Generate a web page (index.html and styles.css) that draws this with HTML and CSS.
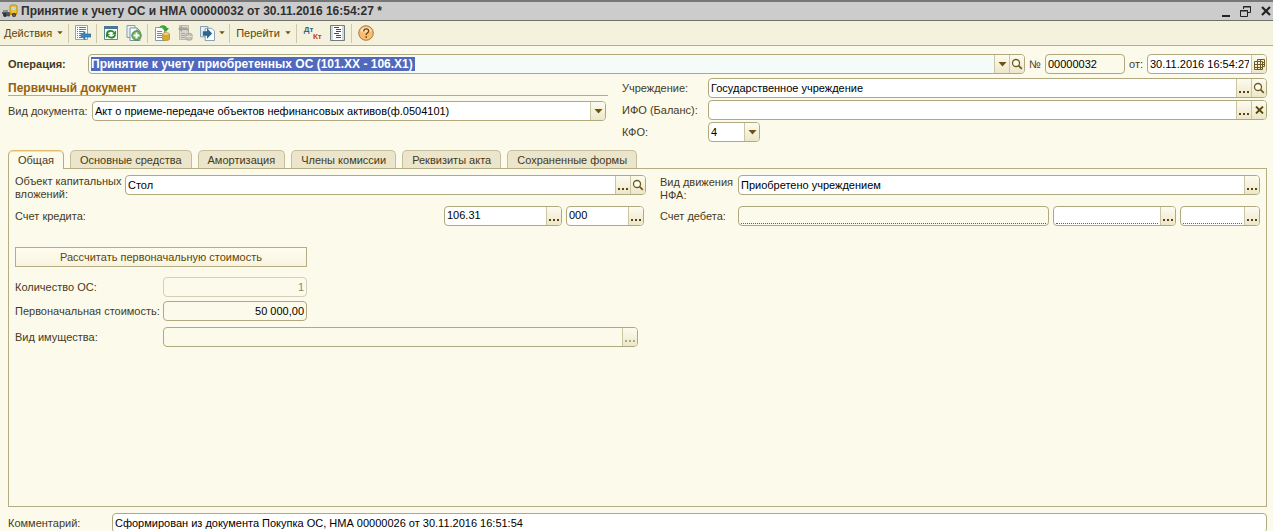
FILE: index.html
```html
<!DOCTYPE html>
<html lang="ru">
<head>
<meta charset="utf-8">
<title>Принятие к учету ОС и НМА</title>
<link rel="stylesheet" href="styles.css">
</head>
<body>
<svg class="defs" aria-hidden="true">
  <symbol id="lens" viewBox="0 0 12 12"><circle cx="5" cy="5" r="3.5" fill="#fffef0" stroke="#6c5a20" stroke-width="1.3"/><path d="M7.6 7.6L10.8 10.8" stroke="#6c5a20" stroke-width="1.8"/></symbol>
  <symbol id="caret" viewBox="0 0 9 5"><path d="M.5 0h8L4.500 4.500z" fill="#6b5410"/></symbol>
  <symbol id="dots" viewBox="0 0 11 2"><path d="M0 0h2v2H0zM4 0h2v2H4zM8 0h2v2H8z" fill="currentColor"/></symbol>
</svg>

<header class="titlebar">
  <svg class="truck" viewBox="0 0 16 14" aria-hidden="true">
    <path d="M0 8h8v2H0z" fill="#555b62"/><path d="M1 6h5v2H1z" fill="#8d8f8a"/>
    <path d="M8 2l1-1h5l1 1v8H8z" fill="#efc02f" stroke="#a57a13" stroke-width=".7"/>
    <path d="M9.500 3h4v3h-4z" fill="#b9daf2"/><path d="M8 9h7v2H8z" fill="#c58a17"/>
    <circle cx="3" cy="11" r="2" fill="#2d3035"/><circle cx="6.500" cy="11" r="1.600" fill="#474a4e"/><circle cx="12" cy="11" r="2" fill="#2d3035"/><circle cx="12" cy="11" r=".7" fill="#bbb"/>
  </svg>
  <h1 class="title">Принятие к учету ОС и НМА 00000032 от 30.11.2016 16:54:27 *</h1>
  <div class="window-buttons">
    <button aria-label="Свернуть"><svg width="8" height="12" viewBox="0 0 8 12"><path d="M0 10h8v2H0z" fill="#222"/></svg></button>
    <button aria-label="Восстановить"><svg width="11" height="11" viewBox="0 0 11 11"><path d="M3.500 3V.5h7v6H8M3 1h8" fill="none" stroke="#222"/><path d="M.5 4.500h7v6h-7zM0 5h8" fill="none" stroke="#222"/></svg></button>
    <button aria-label="Закрыть"><svg width="10" height="10" viewBox="0 0 10 10"><path d="M1 1l8 8M9 1L1 9" stroke="#222" stroke-width="2.200"/></svg></button>
  </div>
</header>

<nav class="toolbar">
  <button class="tool menu">Действия<svg class="tiny"><use href="#caret"/></svg></button>
  <span class="sep"></span>
  <button class="tool" aria-label="Записать и закрыть"><svg width="16" height="16" viewBox="0 0 16 16"><path d="M.5 .5h12v14H.5z" fill="#fbfdff" stroke="#8aa3b8"/><path d="M2 2.500h1m1 0h7M2 4.500h1m1 0h7M2 6.500h1m1 0h5M2 8.500h1m1 0h3M2 10.500h1m1 0h1M2 12.500h1m1 0h3" stroke="#567f9f"/><path d="M5 10.500l5-4v2.500h6v3h-6v2.500z" fill="#3f86b9" stroke="#1f618f" stroke-width=".6"/></svg></button>
  <span class="sep"></span>
  <span class="tools">
    <button class="tool" aria-label="Перечитать"><svg width="16" height="16" viewBox="0 0 16 16"><path d="M1.500 1.500h13v13h-13z" fill="#f5fbf5" stroke="#66829a"/><path d="M1 1h14v3H1z" fill="#49779b"/><path d="M4 9c0-3.500 5-4 7-1.500" fill="none" stroke="#2c852c" stroke-width="1.800"/><path d="M13 5.500V9.500H9z" fill="#2c852c"/><path d="M12 9.500c0 3.500-5 4-7 1.500" fill="none" stroke="#2c852c" stroke-width="1.800"/><path d="M3 13V9h4z" fill="#2c852c"/></svg></button>
    <button class="tool" aria-label="Скопировать"><svg width="16" height="16" viewBox="0 0 16 16"><path d="M1 .5h8v12H1z" fill="#e7f0f5" stroke="#86a0b2"/><path d="M4 3h7l3 3v9.500H4z" fill="#fff" stroke="#7792a5"/><path d="M11 3v3h3" fill="none" stroke="#7792a5"/><circle cx="10.500" cy="10.500" r="4.700" fill="#72af5c" stroke="#47883b"/><path d="M10.500 7.500v6M7.500 10.500h6" stroke="#fff" stroke-width="2"/></svg></button>
  </span>
  <span class="sep"></span>
  <span class="tools">
    <button class="tool" aria-label="Провести"><svg width="16" height="16" viewBox="0 0 16 16"><path d="M1.500 2.500h9v13h-9z" fill="#f9fcff" stroke="#829bae"/><path d="M3 6.500h5M3 8.500h5M3 10.500h5M3 12.500h5" stroke="#688ba5"/><path d="M5 3c2-4 7-3 8 0h2l-3 4-4-4h2c-1-1.500-3-1.500-5 0z" fill="#3da034"/><path d="M9 9h6v6H9z" fill="#edc235"/><ellipse cx="12" cy="9" rx="3.500" ry="1.300" fill="#ffe887" stroke="#ad7d16" stroke-width=".7"/><path d="M8.500 11c1 1.500 6 1.500 7 0M8.500 13c1 1.500 6 1.500 7 0M8.500 9v5.500c1 1.500 6 1.500 7 0V9" fill="none" stroke="#ad7d16" stroke-width=".7"/></svg></button>
    <button class="tool" aria-label="Отменить проведение" disabled><svg width="16" height="16" viewBox="0 0 16 16"><path d="M2.500 .5h9v14h-9z" fill="#d8d6ca" stroke="#bbb9ab"/><path d="M4 8.500h4M4 10.500h4M4 12.500h4" stroke="#aaa99d"/><path d="M1 4l4-3.500v2h3c3 0 4 2 4 5-1-2-2-2.500-4-2.500H5v2z" fill="#a3a29a"/><path d="M9 9.500c0-1.500 6-1.500 6 0V14c0 1.500-6 1.500-6 0z" fill="#c4c2b7" stroke="#aaa89c"/><path d="M9 11.500h6" stroke="#e3e1d4"/></svg></button>
    <button class="tool pair" aria-label="Ввести на основании"><svg width="15" height="15" viewBox="0 0 16 16"><path d="M.5 .5h8v11h-8z" fill="#e8f0f7" stroke="#7c9ab1"/><path d="M5.500 2.500h7l3 3v10h-10z" fill="#fff" stroke="#7c9ab1"/><path d="M3 5.500h4.500v-3L13 8l-5.500 5.500v-3H3z" fill="#2d6792"/></svg><svg class="tiny"><use href="#caret"/></svg></button>
  </span>
  <span class="sep"></span>
  <button class="tool menu">Перейти<svg class="tiny"><use href="#caret"/></svg></button>
  <span class="sep"></span>
  <span class="tools">
    <button class="tool dtkt"><span class="dt">Дт</span><span class="kt">Кт</span></button>
    <button class="tool" aria-label="Структура подчиненности"><svg width="16" height="16" viewBox="0 0 16 16"><path d="M.5 .5h14v15H.5z" fill="#d3d9da" stroke="#747b7d"/><path d="M3 1h9v14H3z" fill="#fff"/><path d="M4 2h5v1H4zM6 4h5v1H6zM6 6h5v1H6zM4 8h5v1H4zM6 10h5v1H6zM6 12h5v1H6z" fill="#245779"/></svg></button>
  </span>
  <span class="sep"></span>
  <button class="tool" aria-label="Справка"><svg width="16" height="16" viewBox="0 0 16 16"><circle cx="8" cy="8" r="7.300" fill="#f7bd72" stroke="#a77a42"/><path d="M2.500 6c1-5 10-5 11 0-3 2-8 2-11 0z" fill="#fce2b8"/><path d="M5.700 6.500c0-3.500 5-3.300 5-.5 0 1.800-2.500 1.700-2.500 4" fill="none" stroke="#79410c" stroke-width="1.400"/><path d="M7.400 11.200h1.600v1.600H7.400z" fill="#79410c"/></svg></button>
</nav>

<main class="form">
  <section class="operation">
    <label class="strong op-label" for="op">Операция:</label>
    <div class="field tinted grow">
      <input id="op" class="marked" value="Принятие к учету приобретенных ОС (101.ХХ - 106.Х1)">
      <span class="fill"></span>
      <button aria-label="Выбрать"><svg class="caret"><use href="#caret"/></svg></button>
      <button aria-label="Открыть"><svg class="lens"><use href="#lens"/></svg></button>
    </div>
    <label class="num-label" for="num">№</label>
    <div class="field plain num"><input id="num" value="00000032"></div>
    <label class="date-label" for="date">от:</label>
    <div class="field date"><input id="date" value="30.11.2016 16:54:27"><button aria-label="Календарь"><svg width="11" height="11" viewBox="0 0 11 11"><path d="M3.500 2V.5h7v7H9" fill="none" stroke="#6c5a20"/><path d="M.5 2.500h8v8h-8zM.5 5.500h10M.5 8.500h8M3.500 2v8.500M6.500 .5v10M8.500 3.500h2" fill="none" stroke="#6c5a20"/></svg></button></div>
  </section>

  <section class="head">
    <div class="primary">
      <h2 class="group-title">Первичный документ</h2>
      <div class="line doc-kind">
        <label for="kind">Вид документа:</label>
        <div class="field select grow"><select id="kind"><option>Акт о приеме-передаче объектов нефинансовых активов(ф.0504101)</option></select><span class="arrow"><svg class="caret"><use href="#caret"/></svg></span></div>
      </div>
    </div>
    <div class="org">
      <label for="org">Учреждение:</label>
      <div class="field"><input id="org" value="Государственное учреждение"><button aria-label="Выбрать"><svg class="dots"><use href="#dots"/></svg></button><button aria-label="Открыть"><svg class="lens"><use href="#lens"/></svg></button></div>
      <label for="ifo">ИФО (Баланс):</label>
      <div class="field"><input id="ifo"><button aria-label="Выбрать"><svg class="dots"><use href="#dots"/></svg></button><button aria-label="Очистить"><svg width="9" height="8" viewBox="0 0 9 8"><path d="M1 .5l7 7M8 .5l-7 7" stroke="#5c4708" stroke-width="1.800"/></svg></button></div>
      <label for="kfo">КФО:</label>
      <div class="field select kfo"><select id="kfo"><option>4</option></select><span class="arrow"><svg class="caret"><use href="#caret"/></svg></span></div>
    </div>
  </section>

  <div class="tabs" role="tablist">
    <button class="tab active" role="tab" aria-selected="true">Общая</button>
    <button class="tab" role="tab">Основные средства</button>
    <button class="tab" role="tab">Амортизация</button>
    <button class="tab" role="tab">Члены комиссии</button>
    <button class="tab" role="tab">Реквизиты акта</button>
    <button class="tab" role="tab">Сохраненные формы</button>
  </div>

  <section class="panel" role="tabpanel">
    <div class="columns">
      <div class="column">
        <div class="line object">
          <label class="two" for="object">Объект капитальных вложений:</label>
          <div class="field grow"><input id="object" value="Стол"><button aria-label="Выбрать"><svg class="dots"><use href="#dots"/></svg></button><button aria-label="Открыть"><svg class="lens"><use href="#lens"/></svg></button></div>
        </div>
        <div class="line credit">
          <label class="grow" for="credit">Счет кредита:</label>
          <div class="field account"><input id="credit" value="106.31"><button aria-label="Выбрать"><svg class="dots"><use href="#dots"/></svg></button></div>
          <div class="field kek"><input aria-label="КЭК кредита" value="000"><button aria-label="Выбрать"><svg class="dots"><use href="#dots"/></svg></button></div>
        </div>
      </div>
      <div class="column right">
        <div class="line">
          <label class="two" for="move">Вид движения НФА:</label>
          <div class="field grow"><input id="move" value="Приобретено учреждением"><button aria-label="Выбрать"><svg class="dots"><use href="#dots"/></svg></button></div>
        </div>
        <div class="line debit">
          <label for="debit">Счет дебета:</label>
          <div class="field plain required grow"><input id="debit" readonly></div>
          <div class="field required debit-account"><input aria-label="Счет"><button aria-label="Выбрать"><svg class="dots"><use href="#dots"/></svg></button></div>
          <div class="field required debit-kek"><input aria-label="КЭК дебета"><button aria-label="Выбрать"><svg class="dots"><use href="#dots"/></svg></button></div>
        </div>
      </div>
    </div>

    <button class="calc">Рассчитать первоначальную стоимость</button>
    <div class="values">
      <label for="count">Количество ОС:</label>
      <div class="field plain disabled amount"><input id="count" value="1" disabled></div>
      <label for="cost">Первоначальная стоимость:</label>
      <div class="field plain amount"><input id="cost" value="50 000,00"></div>
      <label class="property-label" for="property">Вид имущества:</label>
      <div class="field plain property"><input id="property" readonly><button aria-label="Выбрать" disabled><svg class="dots"><use href="#dots"/></svg></button></div>
    </div>
  </section>

  <footer class="comment">
    <label for="comment">Комментарий:</label>
    <div class="field grow"><input id="comment" value="Сформирован из документа Покупка ОС, НМА 00000026 от 30.11.2016 16:51:54"></div>
  </footer>
</main>
</body>
</html>
```
FILE: styles.css
```css
* { box-sizing: border-box; }
body {
  margin: 0;
  height: 100vh;
  display: flex;
  flex-direction: column;
  overflow: hidden;
  background: #fcfaeb;
  color: #453a1c;
  font: 11px/13px "Liberation Sans", Arial, sans-serif;
}
button, input, select { font: inherit; color: inherit; margin: 0; padding: 0; border: 0; background: none; }
svg { display: block; flex: none; }
.defs { position: absolute; width: 0; height: 0; }
.grow { flex: 1; }

.titlebar {
  display: flex;
  align-items: center;
  height: 21px;
  padding: 0 2px;
  background: #ccc;
  border-top: 2px solid #777;
  border-bottom: 1px solid #6f6f65;
}
.truck { width: 16px; height: 14px; }
.title { flex: 1; margin: 0 0 0 3px; font-size: 12px; line-height: 16px; color: #303030; white-space: nowrap; }
.window-buttons { display: flex; align-items: center; gap: 10px; }

.toolbar {
  display: flex;
  align-items: center;
  height: 25px;
  padding: 0 4px;
  background: #f4f1dc;
  border-bottom: 1px solid #b5ae84;
}
.tools { display: flex; gap: 7px; }
.tool { display: flex; align-items: center; justify-content: center; gap: 5px; width: 16px; height: 22px; color: #5c4708; }
.menu { width: auto; }
.pair { width: 24px; gap: 4px; }
.tiny { width: 6px; height: 4px; }
.sep { width: 1px; height: 19px; margin: 0 6px 0 5px; background: #cfc9a8; }
.tool.dtkt { flex-direction: column; align-items: stretch; gap: 0; width: 20px; font-size: 8px; line-height: 7px; font-weight: bold; padding: 0 1px; }
.dt { text-align: left; color: #33658a; }
.kt { text-align: right; color: #c43c2c; }

.form { flex: 1; display: flex; flex-direction: column; min-height: 0; padding: 8px 6px 0 8px; }
.field {
  display: flex;
  height: 20px;
  min-width: 0;
  overflow: hidden;
  background: #fff;
  border: 1px solid #b0a980;
  border-radius: 4px;
  color: #000;
}
.field input { flex: 1; min-width: 0; width: 0; padding: 0 2px; outline: 0; }
.field button, .arrow {
  display: flex;
  align-items: center;
  justify-content: center;
  width: 15px;
  flex: none;
  border-left: 1px solid #cbc5a3;
  background: linear-gradient(#fdfbee, #ece7cb);
  color: #5c4708;
}
.plain { background: #fcfaeb; }
.tinted { background: #f5fbf8; }
.select { display: grid; }
.select select { grid-area: 1 / 1; appearance: none; min-width: 0; padding: 0 2px; outline: 0; }
.arrow { grid-area: 1 / 1; justify-self: end; pointer-events: none; }
.caret { width: 9px; height: 5px; }
.lens { width: 12px; height: 12px; }
.dots { width: 11px; height: 2px; margin-top: 8px; }
.line { display: flex; align-items: center; }

.operation { display: flex; align-items: center; }
.op-label { width: 80px; }
.strong { font-weight: bold; }
.field .marked { flex: none; width: 324px; margin: 2px; padding: 0; background: #5068bd; color: #fff; font-size: 12px; font-weight: bold; }
.fill { flex: 1; }
.num-label { width: 20px; padding-left: 4px; }
.num { width: 80px; }
.date-label { width: 22px; padding-left: 4px; }
.date { width: 120px; }

.head { display: grid; grid-template-columns: 600fr 645fr; column-gap: 14px; margin-top: 4px; }
.group-title { margin: 0 0 5px; height: 18px; font-size: 12px; line-height: 20px; color: #96600f; border-bottom: 1px solid #b5ae84; }
.doc-kind label { width: 84px; }
.doc-kind { padding-right: 2px; }
.org { display: grid; grid-template-columns: 86px 1fr; row-gap: 2px; align-items: center; }
.kfo { width: 52px; }

.tabs { display: flex; gap: 6px; margin-top: 8px; }
.tab { height: 18px; padding: 1px 9px 0; border: 1px solid #c5be9c; border-bottom: 0; border-radius: 5px 5px 0 0; background: #ebe5cb; white-space: nowrap; }
.tab.active { height: 19px; margin-bottom: -1px; border-color: #b5ae84; border-top-color: #e2bd6c; background: #fcfaeb; box-shadow: inset 0 1px #f6dfae; z-index: 1; }
.panel { flex: 1; min-height: 0; padding: 6px; border: 1px solid #b5ae84; }
.columns { display: grid; grid-template-columns: 631fr 600fr; column-gap: 14px; }
.column { display: grid; row-gap: 4px; }
.column .line { min-height: 26px; align-items: flex-start; }
.column .two { width: 110px; }
.right .two { width: 78px; padding: 1px 4px 0 0; }
.credit, .debit { gap: 4px; }
.credit label, .debit label { line-height: 20px; }
.credit { padding-right: 2px; }
.account { width: 118px; }
.kek { width: 78px; }
.debit label { width: 74px; }
.debit-account { width: 123px; }
.debit-kek { width: 80px; }
.required input { margin: 0 2px 1px; border-bottom: 1px dotted #b04040; }

.calc { display: block; width: 292px; height: 20px; margin-top: 15px; border: 1px solid #b5ae84; background: linear-gradient(#fffdf0, #f8f4df); color: #5c4708; }
.values { display: grid; grid-template-columns: 148px 1fr; row-gap: 4px; align-items: center; margin-top: 10px; }
.values input { text-align: right; }
.amount { width: 144px; }
.disabled { border-color: #d3cfb9; color: #8c8878; }
.property { width: 475px; margin-top: 2px; }
.property-label { margin-top: 2px; }
.field button:disabled { color: #b0a980; }

.comment { display: flex; flex: none; align-items: flex-start; height: 18px; margin-top: 6px; overflow: hidden; }
.comment label { width: 104px; line-height: 20px; }
```
